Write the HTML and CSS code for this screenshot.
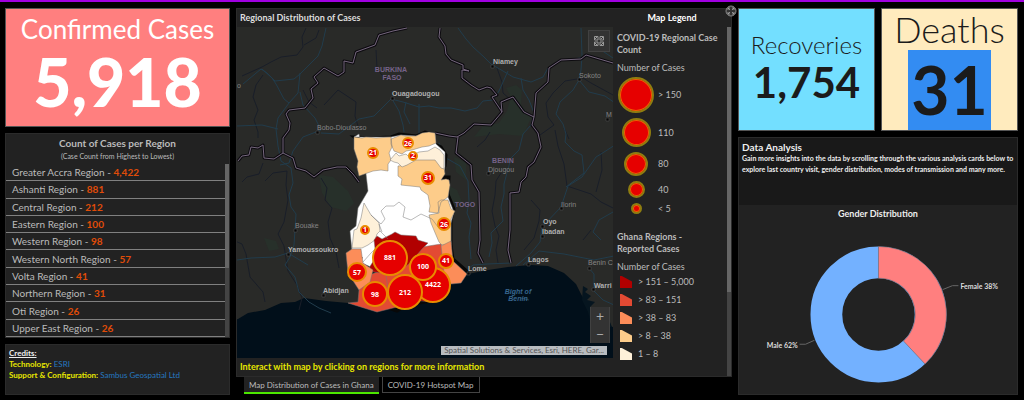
FILE: index.html
```html
<!DOCTYPE html>
<html lang="en">
<head>
<meta charset="utf-8">
<title>Ghana COVID-19 Dashboard</title>
<link rel="stylesheet" href="styles.css">
</head>
<body>
<main class="dashboard">
  <div class="column column-left">
    <section class="card card-confirmed">
      <h2 class="card-title">Confirmed Cases</h2>
      <p class="card-value">5,918</p>
    </section>
    <section class="panel regions">
      <h2 class="regions-title">Count of Cases per Region</h2>
      <p class="regions-note">(Case Count from Highest to Lowest)</p>
      <div class="regions-body">
        <ul class="region-list">
          <li>Greater Accra Region - <b>4,422</b></li>
          <li>Ashanti Region - <b>881</b></li>
          <li>Central Region - <b>212</b></li>
          <li>Eastern Region - <b>100</b></li>
          <li>Western Region - <b>98</b></li>
          <li>Western North Region - <b>57</b></li>
          <li>Volta Region - <b>41</b></li>
          <li>Northern Region - <b>31</b></li>
          <li>Oti Region - <b>26</b></li>
          <li>Upper East Region - <b>26</b></li>
        </ul>
        <div class="scrollbar"><div class="thumb thumb-list"></div></div>
      </div>
    </section>
    <section class="panel credits">
      <p class="credits-title">Credits:</p>
      <p><b>Technology:</b> <a href="#">ESRI</a></p>
      <p><b>Support &amp; Configuration:</b> <a href="#">Sambus Geospatial Ltd</a></p>
    </section>
  </div>

  <div class="column column-center">
    <section class="panel map-panel">
      <button class="expand" aria-label="Expand">
        <svg viewBox="0 0 12 12" width="12" height="12"><circle cx="6" cy="6" r="5" fill="#333" stroke="#888"/><path d="M3 5V3h2M7 3h2v2M9 7v2H7M5 9H3V7M3 3l2 2M9 3l-2 2M3 9l2-2M9 9l-2-2" fill="none" stroke="#aaa" stroke-width=".8"/></svg>
      </button>
      <div class="map-side">
        <h2 class="panel-title">Regional Distribution of Cases</h2>
        <div class="map">
          <svg class="map-canvas" viewBox="236 27 376 331" preserveAspectRatio="xMidYMid slice">
            <defs>
              <path id="frontiers" d="M406 28l-14 3-14 4-4 10-19 7-3 11-9-2v11l-6 4-14-8-10 9 4 6-7 6 2 9-8 10-16 2-3 4 4 9-1 7-6 8v15l-9 6-10-1-1-13-5 3-7-1-2 8-7 1-4 5M282 153l10 5 3 10 10 3 8 6 9-7 14-3 9 0 7 7 6 8M439 28l-1 9 6 9 1 8 5 6 12 5 0 4 6 2-7-1v8l9 7 8 5 8-3 4 1 6 7-5 2 10 15-11 13-17-1-10 9-7 4-8-1-14-3M501 112l-1-10 7-3 5-2 11 15 10 5 2-24 12-11 1-14 12-8 20-1 5-4 27 8M533 117l-2 8 6 8 3 14-7 15-6 5-2 10-5 5-2 10-9 1v37l-2 20 3 13M457 137l-2 16 15 12 1 15 7 12 1 48-2 13 5 10"/>
            </defs>
            <rect x="136" y="-73" width="576" height="531" fill="#292a28"/>
            <g fill="#27302a"><path d="M318 175l14 2 15 14 6 12-8 8-15-4-9-14zM505 88l10-3 6 5-1 14 10 14-8 18-24-2-25 3 8-10 17-4 8-12 4-14zM263 238l12 3 3 8-10 2zM440 182l16 8 5 12-7 3zM453 157l12 5 0 18-10-8z"/></g>
            <path d="M136 340L237 319l10-6 17-3 16-7 14-1 9-4 22 3 22 2 29 9 74-28 17-10 20-4 20-3 23-2 17 1 16 7 12 11 5 10 7 13 3 14 22 6 120 10v180H136z" fill="#010f1a"/>
            <path d="M582 286l5 3-3 3 6 4-4 4 8 2-5 5 10 2-4 5 12 3 4 10h-20l-4-15-6-12z" fill="#06151f"/>
            <g class="streams">
              <path d="M305 28l-4 9 1 10-6 8-16 2-10 5-9 5-20 9M303 45l12-7 3-8M262 75l-7 10-3 12 5 13-4 10 4 12 0 6M323 105l14-15 18 12-1 14 3 10M302 90l6 12 8 6M241 182l5-5 12-3 4-11M264 181l8-8 14-2-1 14 2 15-4 22-6 12 6 12 4 25 9 14 5 13-3 12M320 178l6 10-2 12 7 8-4 14 2 16 6 14 3 16M375 50l1 18 4 6 8 6M234 241l7 3 4 10 4 23 13 15 2 10"/>
              <path d="M496 68l5 14 1 11 8 7M612 95l-22-12-8-5-18 3-12 12-7 10 2 14 6 8-14 10M476 147l8-7 5-8M500 173l-5 8-1 14-3 16 3 15 4 10-3 14 2 13M554 130l3 16 6 18 3 22 24 8 10 8 12 6M530 200l9 10-1 11-5 17-10 12M600 152l1 18-6 22 M563 128l5 11 M582 240l8-10"/>
            </g>
            <g class="roads">
              <path d="M325 28l-4 18-4 10-18 18-6 5-19 2-8-8-6-4-18 15M261 69l10 9 4 6 8 15 5 4 9-10 2-20M288 103l-11 15-2 11 2 17 3 15 10 7 2 15-4 12 2 12 5 7-2 31-4 12-5 8 10 12 4 15 10 10 10 6 12 5M236 126l25-1 16 4M299 92l3 13 12 13 6 12-18 7-10 14-4 12-9 2M320 133l18 1 20-15 15-3 17-17 12 3 16 5 10-1 10 2 12 0 14 3 12-3 6-7 10-1 6-9 9-20M418 104l0 30M391 99l7 12 4 14 1 7M236 260l14-2 24-1 13-4 20 12M405 102l-2 10 6 12"/>
              <path d="M457 28l8 11 7 8 11 10 7 7 12 7 10 6 18 5 12-5 5-9 10-7 22-3 10-3 M520 78l2 12 6 10 5 13-3 12-8 9-4 16-8 8-7 26 0 10-3 13 2 14-12 12 1 10-3 14M580 28l1 27-1 15-2 10-6 10-13 12-4 12 7 10 3 10-1 8M578 80l10 12 16 4 10 7M614 145l-14 9-5 3-14 20-14 9-7 21-19 20-2 15-9 11-15 13M522 265l16-14 25 3 30 6 20-4M564 142l9 9 8 4 2 18-18 14M438 143l7 15 14 8 8 15 1 20-2 12 4 10-2 14 2 22M460 275l12-10 14-1 24-1M600 240l-8-8 6-12 14-8M588 268l5 6 0 17 9 9 11 5M600 50l12 8M528 300l-8-2"/>
            </g>
            <use class="border-halo" href="#frontiers"/>
            <use class="border-line" href="#frontiers"/>
            <g class="ghana">
              <path class="ghana-halo" d="M353 137l17 1 20-1 8-3 17 2 9-4 9 2 1 10 6 3 5 8-1 11-4 11 8 0-1 17 6 15-3 11v25l2 14 14 12-6 9-10 1-20 20-24 4-10 6-29-10 10-1 1-12-11-17-2-20 6-5 2-18 10-17-3-26-3-11-3-20z"/>
              <path fill="#fff" d="M353 137l37 0 10-2 15 1 13-3 6 1 1 10 9 8v16l-4 12 8 0-1 17 6 15-3 11v25l-20 20-30 8-28-8-20-9 10-1-11-7-2-20 6-5 2-18 10-17-3-26-3-11-3-20z"/>
              <path fill="#fdcc8a" d="M353 137l8 1 4-1 10 1 15-1 1 10-3 6 2 7-3 4 0 7-7-1-8 1-14 5-2-9 1-6-4-12zM390 139l10-4 4 1 11 0 6-3 7-1 6 1 1 10-7 3-7 1-10 3-6 1-4 3-8-3-3-7zM397 166l8-1 10-7h19l3 5 6 4 1 7-4 6 5-1 3 1 1 5-2 12-7 5-3 11-9-1 1-6-2-11-7-5-1-3-19-2 1-6-4-3zM437 202l3-2 7 0 3 9 4 2-4 8v25l-9 1-3-3-3-7-5-12-2-8 10-2z"/>
              <path fill="#fef0d9" d="M389 160l6-7 3 3 7-2 3 3 10-5 9-1 7-4 5 3 4 5v14l-3-1-6-8h-19l-9 5-5 2-4-4-4-1zM363 203l7 12 8 8 1 8-3 3-2 6-7 5-6 3h-10l2-18 3-1 4-11z"/>
              <path fill="#e34a33" d="M347 303l10-1 1-12 8-14 20-8 22-6 13-15 19-3 5 17v20l-20 18-20 3-5 4-24 6z"/>
              <path fill="#b10000" d="M373 240l3-4 5 3 10-5 3-2 6 3 15 1 2 4 10 3-6 6-12 14-15 12-28-4 9-14zM412 300l16-22 22 6-20 18z"/>
              <path fill="#fc8d59" d="M345 253l6-4 9 0 2 14 10 7-3 12-11 8-11-17zM440 246l10-5 2 20 14 13-6 9-10 1-7-12z"/>
              <path fill="none" d="M370 215l10 9 4-5-4-8 5-5 8 0 5-4 6 5-2 10 8 3 10-6 11 5 6 8M379 231l8 8M378 224l3 8M362 262l8-9 6-6M385 275l2 14-3 8"/>
            </g>
            <g class="bubbles">
              <circle cx="432" cy="285" r="17"/><circle cx="422" cy="267" r="13"/><circle cx="389" cy="258" r="17"/><circle cx="374" cy="294" r="12"/><circle cx="404" cy="292" r="17"/><circle cx="356" cy="272" r="9"/><circle cx="445" cy="261" r="7"/>
              <circle cx="443" cy="224" r="6"/><circle cx="427" cy="178" r="6"/><circle cx="407" cy="143" r="5"/><circle cx="372" cy="153" r="5"/><circle cx="412" cy="156" r="4"/><circle cx="364" cy="230" r="4"/>
            </g>
            <g class="counts">
              <text x="432" y="287">4422</text><text x="422" y="269">100</text><text x="389" y="260">881</text><text x="374" y="297">98</text><text x="404" y="295">212</text><text x="356" y="275">57</text><text x="445" y="263">41</text><text x="443" y="227">26</text><text x="427" y="180">31</text><text x="407" y="146">26</text><text x="372" y="155">21</text><text x="412" y="158">2</text><text x="364" y="232">1</text>
            </g>
            <g class="towns">
              <path d="M390 97h3v3h-3zM315 131h3v3h-3zM293 229h3v3h-3zM286 253h3v3h-3zM321 294h3v3h-3zM490 65h3v3h-3zM577 78h3v3h-3zM605 118h3v3h-3zM486 172h3v3h-3zM559 207h3v3h-3zM540 225h3v3h-3zM540 235h3v3h-3zM466 272h3v3h-3zM526 263h3v3h-3zM587 267h3v3h-3zM591 288h3v3h-3z"/>
              <text x="236" y="88">o</text><text class="major" x="391" y="96">Ouagadougou</text><text x="316" y="130">Bobo-Dioulasso</text><text x="294" y="228">Bouake</text><text class="major" x="287" y="252">Yamoussoukro</text><text class="major" x="322" y="293">Abidjan</text><text class="major" x="492" y="64">Niamey</text><text x="578" y="78">Sokoto</text><text x="605" y="117">M</text><text x="487" y="172">Djougou</text><text x="560" y="207">Ilorin</text><text class="major" x="542" y="224">Oyo</text><text class="major" x="541" y="234">Ibadan</text><text class="major" x="467" y="271">Lome</text><text class="major" x="527" y="262">Lagos</text><text x="587" y="265">Benin C</text><text class="major" x="593" y="288">Warri</text>
            </g>
            <g class="countries"><text x="390" y="72">BURKINA</text><text x="391" y="80">FASO</text><text x="502" y="163">BENIN</text><text x="464" y="207">TOGO</text></g>
            <g class="sea"><text x="517" y="294">Bight of</text><text x="517" y="301">Benin</text></g>
          </svg>
          <button class="map-button basemap" aria-label="Basemap gallery">
            <svg viewBox="0 0 12 12" width="12" height="12" fill="none" stroke="#999"><path d="M1.500 1.500h3.500v3.500h-3.500zM7 1.500h3.500v3.500H7zM1.500 7h3.500v3.500h-3.500zM7 7h3.500v3.500H7zM2 4l2-2M8 4l2-2M2 8l2 2M8 10l2-2"/></svg>
          </button>
          <div class="zoom">
            <button class="map-button" aria-label="Zoom in">+</button>
            <button class="map-button" aria-label="Zoom out">−</button>
          </div>
          <p class="attribution">Spatial Solutions &amp; Services, Esri, HERE, Gar...</p>
        </div>
        <p class="map-hint">Interact with map by clicking on regions for more information</p>
      </div>
      <aside class="legend">
        <h2 class="panel-title legend-title">Map Legend</h2>
        <div class="legend-row">
          <div class="legend-body">
            <h3>COVID-19 Regional Case Count</h3>
            <p>Number of Cases</p>
            <ul class="legend-bubbles">
              <li><span><i class="dot dot-xl"></i></span>&gt; 150</li>
              <li><span><i class="dot dot-l"></i></span>110</li>
              <li><span><i class="dot dot-m"></i></span>80</li>
              <li><span><i class="dot dot-s"></i></span>40</li>
              <li><span><i class="dot dot-xs"></i></span>&lt; 5</li>
            </ul>
            <h3>Ghana Regions - Reported Cases</h3>
            <p>Number of Cases</p>
            <ul class="legend-areas">
              <li><i class="area area-1"></i>&gt; 151 – 5,000</li>
              <li><i class="area area-2"></i>&gt; 83 – 151</li>
              <li><i class="area area-3"></i>&gt; 38 – 83</li>
              <li><i class="area area-4"></i>&gt; 8 – 38</li>
              <li><i class="area area-5"></i>1 – 8</li>
            </ul>
          </div>
          <div class="scrollbar"><div class="thumb thumb-legend"></div></div>
        </div>
      </aside>
    </section>
    <nav class="tabs">
      <button class="tab tab-active">Map Distribution of Cases in Ghana</button>
      <button class="tab">COVID-19 Hotspot Map</button>
    </nav>
  </div>

  <div class="column column-right">
    <div class="cards">
      <section class="card card-recoveries">
        <h2 class="card-title">Recoveries</h2>
        <p class="card-value">1,754</p>
      </section>
      <section class="card card-deaths">
        <h2 class="card-title">Deaths</h2>
        <p class="card-value">31</p>
      </section>
    </div>
    <section class="panel analysis">
      <header class="analysis-head">
        <h2>Data Analysis</h2>
        <p>Gain more insights into the data by scrolling through the various analysis cards below to explore last country visit, gender distribution, modes of transmission and many more.</p>
      </header>
      <h3 class="chart-title">Gender Distribution</h3>
      <svg class="chart" viewBox="738 226 280 164">
        <circle cx="878.500" cy="314" r="52.500" fill="none" stroke="#73b1ff" stroke-width="32"/>
        <path d="M878.500 245.500A68.500 68.500 0 0 1 925.400 363.900L903.700 340.800A36.500 36.500 0 0 0 878.500 277.500Z" fill="#ff7f7f" stroke="#58595c" stroke-width=".5"/>
        <path d="M943 289l10-4h6M814 340l-9 4h-6" fill="none" stroke="#666"/>
        <text x="961" y="288">Female 38%</text>
        <text x="766" y="348">Male 62%</text>
      </svg>
    </section>
  </div>
</main>
</body>
</html>
```
FILE: styles.css
```css
* { box-sizing: border-box; }
body {
  margin: 0;
  background: #000;
  color: #bbb;
  font-family: Lato, "Liberation Sans", sans-serif;
  font-size: 9px;
  line-height: 12px;
}
h2, h3, p, ul { margin: 0; padding: 0; font-size: inherit; }
ul { list-style: none; }
button { font: inherit; color: inherit; padding: 0; margin: 0; cursor: pointer; }
a { color: #2678c0; text-decoration: none; }

.dashboard {
  display: grid;
  grid-template-columns: 225fr 496fr 281fr;
  gap: 6px;
  min-height: 100vh;
  padding: 6px 5px 5px;
  border-top: 2px solid #a000e0;
}
.column { display: flex; flex-direction: column; gap: 6px; min-width: 0; }
.panel { background: #222; border: 1px solid #2b2b2b; }

.card {
  display: flex;
  flex-direction: column;
  align-items: center;
  border: 1px solid #555;
  white-space: nowrap;
}
.card-title { font-weight: 400; }
.card-value { font-weight: 700; }
.card-confirmed { background: #ff7f7f; color: #fff; height: 119px; padding-top: 4px; }
.card-confirmed .card-title { font-size: 26px; line-height: 32px; }
.card-confirmed .card-value { font-size: 66px; line-height: 74px; font-weight: 900; }

.regions { flex: 1; display: flex; flex-direction: column; }
.regions-title { font-size: 10px; line-height: 12px; text-align: center; padding-top: 3px; }
.regions-note { font-size: 7px; line-height: 8px; text-align: center; padding: 3px 0 4px; }
.regions-body { flex: 1; display: flex; }
.region-list { flex: 1; display: flex; flex-direction: column; font-size: 10px; }
.region-list li {
  flex: 1;
  display: flex;
  align-items: center;
  white-space: pre;
  padding-left: 6px;
  border-bottom: 1px solid #808080;
}
.region-list b { color: #e04c08; }
.scrollbar { width: 4px; background: #444; }
.thumb { background: #666; }
.thumb-list { height: 60%; }
.thumb-legend { height: 76%; }

.credits { height: 51px; padding: 3px; font-size: 8px; line-height: 11px; }
.credits b { color: #e6e600; }
.credits .credits-title { color: #eee; font-weight: 700; text-decoration: underline; }

.column-center { gap: 0; }
.map-panel { flex: 1; display: flex; position: relative; }
.expand {
  position: absolute;
  right: -6px;
  top: -4px;
  width: 12px;
  height: 12px;
  border: 0;
  background: none;
}
.expand svg { display: block; }
.map-side { flex: 376; display: flex; flex-direction: column; min-width: 0; }
.panel-title { color: #ddd; font-size: 9px; line-height: 18px; padding-left: 3px; font-weight: 700; }
.map { flex: 1; position: relative; min-height: 331px; overflow: hidden; }
.map-canvas { position: absolute; inset: 0; width: 100%; height: 100%; }
.map-hint { color: #e6e600; font-size: 9px; line-height: 18px; font-weight: 700; padding-left: 3px; }
.map-button {
  width: 20px;
  border: 1px solid #414141;
  background: #333;
  color: #aaa;
}
.basemap { position: absolute; top: 3px; right: 3px; width: 22px; height: 22px; display: grid; place-items: center; }
.zoom { position: absolute; right: 3px; bottom: 15px; display: grid; }
.zoom .map-button { height: 18px; border-width: 0 1px; font-size: 14px; line-height: 16px; }
.attribution {
  position: absolute;
  right: 6px;
  bottom: 3px;
  background: #b8bcc0;
  color: #555;
  font-size: 8px;
  line-height: 9px;
  padding: 0 3px;
  white-space: nowrap;
}
.streams, .roads { fill: none; stroke-width: 1; }
.streams { stroke: #191e28; }
.roads { stroke: #213c4c; }
.border-halo, .border-line { fill: none; stroke-linejoin: round; }
.border-halo { stroke: #0d0b10; stroke-width: 3; }
.border-line { stroke: #75677d; stroke-width: 1; }
.ghana { stroke: #777; stroke-width: 0.5; }
.ghana .ghana-halo { fill: #080808; stroke: #080808; stroke-width: 3; }
.bubbles { fill: #e60000; stroke: #e98b00; stroke-width: 2; }
.counts, .towns, .countries, .sea { font-family: "Liberation Sans", sans-serif; font-size: 7px; }
.counts { fill: #fff; font-family: "Open Sans", sans-serif; font-weight: 700; text-anchor: middle; }
.towns { fill: #858585; }
.towns path { fill: #080808; stroke: #555; stroke-width: 0.5; }
.towns .major { fill: #b0b0b0; font-weight: 700; }
.countries { fill: #766389; font-weight: 700; text-anchor: middle; }
.sea { fill: #37658d; font-style: italic; font-weight: 700; text-anchor: middle; }

.legend { flex: 118; display: flex; flex-direction: column; min-width: 0; }
.legend-title { text-align: center; color: #fff; padding: 0; }
.legend-row { flex: 1; display: flex; }
.legend-body { flex: 1; padding: 5px 0 0 4px; }
.legend-body h3 { padding-right: 8px; font-weight: 700; }
.legend-body p { padding: 6px 0 3px; line-height: 12px; }
.legend-bubbles { display: grid; gap: 5px; padding-bottom: 17px; }
.legend-bubbles li { display: flex; align-items: center; gap: 3px; line-height: 10px; }
.legend-bubbles span { width: 38px; display: grid; place-items: center; }
.dot { border-radius: 50%; background: #e60000; border: 2px solid #8f7d10; box-shadow: inset 0 0 0 1px #f06000; }
.dot-xl { width: 36px; height: 36px; }
.dot-l { width: 29px; height: 29px; }
.dot-m { width: 24px; height: 24px; }
.dot-s { width: 17px; height: 17px; }
.dot-xs { width: 11px; height: 11px; }
.legend-areas { display: grid; gap: 6px; padding-left: 3px; }
.legend-areas li { display: flex; align-items: center; gap: 6px; }
.area { width: 12px; height: 12px; clip-path: polygon(0 0, 15% 0, 100% 45%, 100% 100%, 0 100%); }
.area-1 { background: #b10000; }
.area-2 { background: #e34a33; }
.area-3 { background: #fc8d59; }
.area-4 { background: #fdcc8a; }
.area-5 { background: #fef0d9; }

.tabs { display: flex; gap: 3px; padding: 0 8px; height: 18px; align-items: flex-start; }
.tab { height: 16px; padding: 0 5px; border: 1px solid #444; border-top: 0; background: #000; font-size: 8px; line-height: 12px; }
.tab-active { height: 17px; border: 0; border-bottom: 2px solid #4ce600; background: #222; }

.cards { display: grid; grid-template-columns: 1fr 1fr; gap: 6px; height: 123px; }
.column-right { padding-right: 1px; }
.card-recoveries { background: #73dfff; color: #1b1b1b; padding-top: 22px; }
.card-recoveries .card-title { font-size: 24px; line-height: 28px; font-weight: 300; }
.card-recoveries .card-value { font-size: 42px; line-height: 46px; }
.card-deaths { background: #ffebbe; color: #1b1b1b; }
.card-deaths .card-title { font-size: 36px; line-height: 41px; font-weight: 300; }
.card-deaths .card-value { flex: 1; font-size: 66px; line-height: 80px; background: #338cf2; padding: 0 3px; }

.analysis { flex: 1; display: flex; flex-direction: column; }
.analysis-head { background: #191919; color: #eee; height: 67px; padding: 3px; font-size: 7px; line-height: 11px; }
.analysis-head h2 { font-size: 10px; line-height: 12px; }
.analysis-head p { font-weight: 700; }
.chart-title { color: #eee; font-size: 9px; line-height: 18px; text-align: center; }
.chart { flex: 1; width: 100%; min-height: 164px; }
.chart text { fill: #ddd; font-size: 7px; font-weight: 700; }
```
